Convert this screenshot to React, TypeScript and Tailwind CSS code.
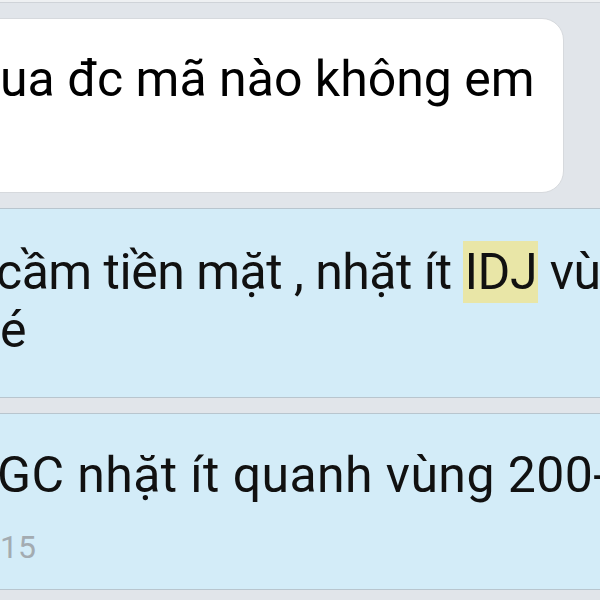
const font = { fontFamily: 'Roboto, "Liberation Sans", Arial, sans-serif' };

export default function App() {
  return (
    <div
      className="flex h-[600px] w-[600px] flex-col overflow-hidden bg-[#e1e5ea]"
      style={font}
    >
      <div className="h-[3px] shrink-0 border-b border-[#cfd3d8] bg-[#eef0f2]" />
      <div className="mt-[15px] ml-[-30px] h-[175px] w-[594px] shrink-0 rounded-r-[22px] border border-[#d6d9dd] bg-white pt-[31px] pl-[29px]">
        <p className="text-[50px] leading-[58px] whitespace-nowrap text-black">
          ua đc mã nào không em
        </p>
      </div>
      <div className="mt-[15px] h-[190px] shrink-0 border-y border-[#b8c5ce] bg-[#d3ecf8] pt-[34px]">
        <p className="ml-[-4px] text-[50px] leading-[58px] tracking-[-0.5px] whitespace-nowrap text-[#111]">
          cầm tiền mặt , nhặt ít{" "}
          <span className="bg-[#e9e6a7] px-[1px] py-[2px]">IDJ</span> vùng
        </p>
        <p className="text-[50px] leading-[58px] text-[#111]">é</p>
      </div>
      <div className="mt-[15px] h-[177px] shrink-0 border-y border-[#b8c5ce] bg-[#d3ecf8] pt-[32px]">
        <p className="ml-[-3px] text-[50px] leading-[58px] tracking-[0.4px] whitespace-nowrap text-[#111]">
          GC nhặt ít quanh vùng 200-300
        </p>
        <p className="mt-[26px] text-[32px] leading-[34px] text-[#a3abb1]">15</p>
      </div>
    </div>
  );
}
